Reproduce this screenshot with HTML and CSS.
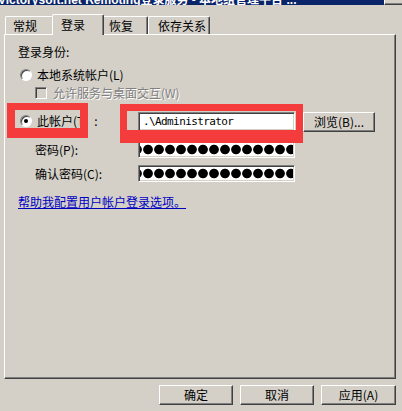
FILE: index.html
```html
<!DOCTYPE html>
<html lang="zh-CN">
<head>
<meta charset="utf-8">
<title>登录</title>
<link rel="stylesheet" href="styles.css">
</head>
<body>
<div class="window">
  <div class="titlebar">
    <span class="title">Victorysoft.net Remoting登录服务 - 本地组管理平台 ...</span>
    <span class="close"></span>
  </div>
  <div class="tabs">
    <div class="tab t1">常规</div>
    <div class="tab active">登录</div>
    <div class="tab t3">恢复</div>
    <div class="tab t4">依存关系</div>
  </div>
  <div class="panel">
    <div class="heading">登录身份:</div>
    <div class="row opt">
      <span class="radio"></span>
      <span>本地系统帐户(L)</span>
    </div>
    <div class="row check">
      <span class="checkbox"></span>
      <span class="disabled">允许服务与桌面交互(W)</span>
    </div>
    <div class="row account">
      <div class="label opt">
        <span class="radio on"></span>
        <span>此帐户(T)<span class="colon">:</span></span>
      </div>
      <div class="field text">.\Administrator</div>
      <div class="btn browse">浏览(B)...</div>
    </div>
    <div class="row pw">
      <div class="label sub">密码(P):</div>
      <div class="field dots"></div>
    </div>
    <div class="row pw2">
      <div class="label sub">确认密码(C):</div>
      <div class="field dots"></div>
    </div>
    <a class="link" href="#">帮助我配置用户帐户登录选项。</a>
  </div>
  <div class="buttons">
    <div class="btn action">确定</div>
    <div class="btn action">取消</div>
    <div class="btn action wide">应用(A)</div>
  </div>
</div>
<div class="mark mark1"></div>
<div class="mark mark2"></div>
</body>
</html>
```

FILE: styles.css
```css
html, body {
  margin: 0;
  padding: 0;
}
body {
  width: 402px;
  height: 411px;
  overflow: hidden;
  background: #d4d0c8;
  font-family: "Noto Sans CJK SC", "Liberation Sans", sans-serif;
  font-size: 12px;
  color: #000;
  position: relative;
}
.window {
  display: flex;
  flex-direction: column;
  padding: 0 6px 0 4px;
}
.titlebar {
  height: 5px;
  margin: 0 -6px 0 -4px;
  background: #0a246a;
  display: flex;
  align-items: flex-end;
  overflow: hidden;
}
.title {
  flex: 1;
  white-space: nowrap;
  color: #fff;
  font-family: "Liberation Sans", "Noto Sans CJK SC", sans-serif;
  font-weight: bold;
  font-size: 12px;
  line-height: 14px;
  margin-left: -2px;
  margin-bottom: -2px;
}
.close {
  width: 18px;
  height: 5px;
  box-sizing: border-box;
  background: #d4d0c8;
  border-left: 1px solid #fff;
  border-bottom: 1px solid #404040;
  box-shadow: inset 0 -1px #808080;
  flex: none;
}
.tabs {
  display: flex;
  align-items: flex-end;
  height: 20px;
  margin-top: 9px;
  padding-left: 1px;
  position: relative;
  z-index: 1;
}
.tab {
  box-sizing: border-box;
  height: 18px;
  padding: 2px 0 0 7px;
  line-height: 14px;
  border-top: 1px solid #fff;
  border-left: 1px solid #fff;
  border-right: 1px solid #404040;
  box-shadow: inset -1px 0 #808080;
  border-radius: 2px 2px 0 0;
  background: #d4d0c8;
  white-space: nowrap;
}
.t1 { width: 49px; }
.t3 { width: 46px; padding-left: 6px; }
.t4 { width: 62px; padding-left: 9px; }
.tab.active {
  width: 52px;
  height: 21px;
  margin: 0 -2px -1px -2px;
  padding: 3px 0 0 8px;
  position: relative;
  z-index: 2;
}
.panel {
  box-sizing: border-box;
  width: 392px;
  height: 345px;
  border-top: 1px solid #fff;
  border-left: 1px solid #fff;
  border-right: 1px solid #404040;
  border-bottom: 1px solid #404040;
  box-shadow: inset -1px -1px #808080;
  padding-left: 13px;
  display: flex;
  flex-direction: column;
  align-items: flex-start;
}
.heading {
  margin-top: 10px;
  line-height: 14px;
}
.row {
  display: flex;
  align-items: center;
  line-height: 14px;
}
.opt {
  display: flex;
  align-items: center;
  gap: 5px;
}
.row.opt {
  margin-top: 9px;
  height: 14px;
  padding-left: 2px;
}
.radio {
  box-sizing: border-box;
  width: 12px;
  height: 12px;
  border-radius: 50%;
  border: 1px solid;
  border-color: #808080 #fff #fff #808080;
  background: #fff;
  box-shadow: inset 1px 1px #404040;
  display: flex;
  align-items: center;
  justify-content: center;
  flex: none;
}
.radio.on::after {
  content: "";
  width: 4px;
  height: 4px;
  border-radius: 50%;
  background: #000;
}
.row.check {
  margin-top: 4px;
  height: 14px;
  padding-left: 17px;
  gap: 6px;
}
.checkbox {
  box-sizing: border-box;
  width: 12px;
  height: 12px;
  border: 1px solid;
  border-color: #808080 #fff #fff #808080;
  box-shadow: inset 1px 1px #404040, inset -1px -1px #d4d0c8;
  background: #d4d0c8;
  flex: none;
}
.disabled {
  color: #808080;
  text-shadow: 1px 1px 0 #fff;
}
.label {
  width: 120px;
  flex: none;
  white-space: nowrap;
}
.label.opt {
  padding-left: 2px;
  box-sizing: border-box;
}
.colon {
  margin-left: 6px;
}
.label.sub {
  padding-left: 17px;
  box-sizing: border-box;
}
.row.account {
  margin-top: 12px;
  height: 20px;
  align-items: flex-start;
}
.row.account .label {
  height: 20px;
  margin-top: -1px;
}
.field {
  box-sizing: border-box;
  width: 157px;
  border: 1px solid;
  border-color: #808080 #fff #fff #808080;
  box-shadow: inset 1px 1px #404040, inset -1px -1px #d4d0c8;
  background: #fff;
  flex: none;
}
.field.text {
  height: 19px;
  padding-left: 4px;
  font-family: "DejaVu Sans Mono", "Liberation Mono", monospace;
  font-size: 11px;
  letter-spacing: -0.6px;
  line-height: 17px;
}
.btn {
  box-sizing: border-box;
  height: 20px;
  border: 1px solid;
  border-color: #fff #404040 #404040 #fff;
  box-shadow: inset -1px -1px #808080;
  background: #d4d0c8;
  display: flex;
  align-items: center;
  justify-content: center;
  line-height: 14px;
  white-space: nowrap;
  flex: none;
}
.browse {
  width: 72px;
  margin-left: 8px;
}
.row.pw {
  margin-top: 9px;
  height: 17px;
}
.row.pw2 {
  margin-top: 7px;
  height: 17px;
}
.field.dots {
  height: 17px;
  background-color: #fff;
  background-image: radial-gradient(circle at 5px 50%, #000 4.4px, rgba(0,0,0,0) 5.2px);
  background-size: 11px 100%;
  background-repeat: repeat-x;
  background-position: 4px 0;
  background-clip: padding-box;
}
.link {
  margin-top: 13px;
  line-height: 14px;
  color: #0000c0;
  text-decoration: underline;
}
.buttons {
  display: flex;
  justify-content: flex-end;
  gap: 7px;
  margin-top: 6px;
}
.action {
  width: 74px;
}
.action.wide {
  width: 75px;
}
.mark {
  position: absolute;
  box-sizing: border-box;
  border: solid #f43c3c;
  z-index: 5;
}
.mark1 {
  left: 7px;
  top: 103px;
  width: 81px;
  height: 35px;
  border-width: 7px 8px 10px 8px;
}
.mark2 {
  left: 120px;
  top: 104px;
  width: 183px;
  height: 39px;
  border-width: 7px 7px 13px 7px;
}
```
